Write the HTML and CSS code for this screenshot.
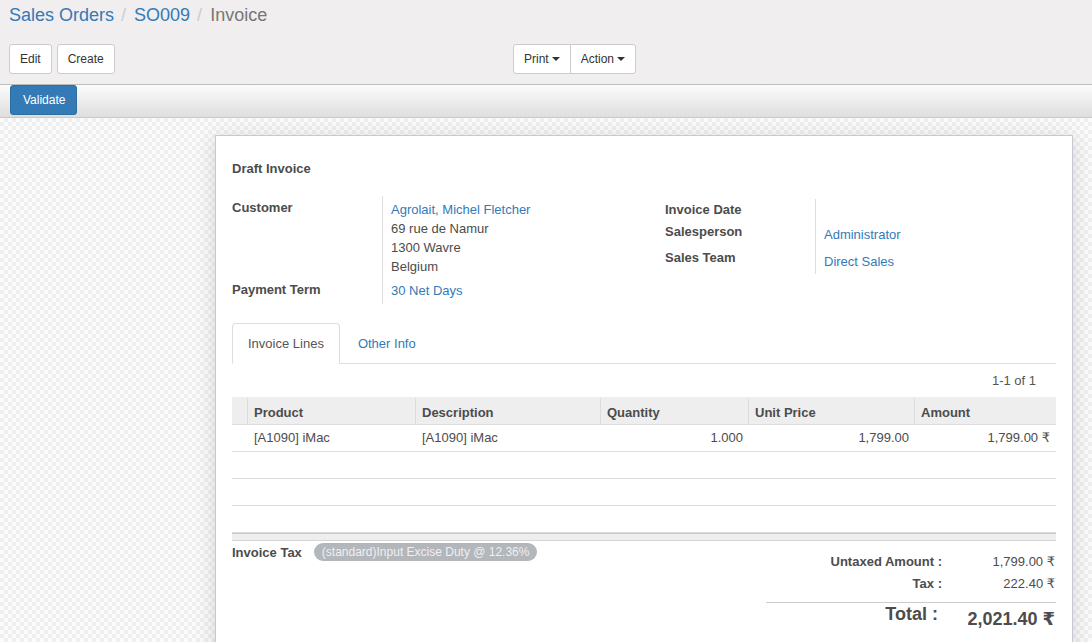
FILE: index.html
```html
<!DOCTYPE html>
<html>
<head>
<meta charset="utf-8">
<link rel="stylesheet" href="styles.css">
</head>
<body>
<div class="cp">
  <div class="crumbs">
    <a class="link">Sales Orders</a><span class="sep">/</span><a class="link">SO009</a><span class="sep">/</span><span class="cur">Invoice</span>
  </div>
  <div class="cp-row">
    <div class="cp-left">
      <button class="btn">Edit</button>
      <button class="btn">Create</button>
    </div>
    <div class="btn-group">
      <button class="btn grp">Print<span class="caret"></span></button>
      <button class="btn grp">Action<span class="caret"></span></button>
    </div>
  </div>
</div>
<div class="statusbar">
  <button class="btn primary">Validate</button>
</div>
<div class="sheetbg">
  <div class="sheet">
    <div class="title">Draft Invoice</div>
    <div class="groups">
      <div class="group left">
        <div class="row r-cust">
          <div class="lbl">Customer</div>
          <div class="val"><a class="link">Agrolait, Michel Fletcher</a><br>69 rue de Namur<br>1300 Wavre<br>Belgium</div>
        </div>
        <div class="row r-term">
          <div class="lbl">Payment Term</div>
          <div class="val"><a class="link">30 Net Days</a></div>
        </div>
      </div>
      <div class="group right">
        <div class="row r-date">
          <div class="lbl">Invoice Date</div>
          <div class="val"></div>
        </div>
        <div class="row r-sp">
          <div class="lbl">Salesperson</div>
          <div class="val"><a class="link">Administrator</a></div>
        </div>
        <div class="row r-team">
          <div class="lbl">Sales Team</div>
          <div class="val"><a class="link">Direct Sales</a></div>
        </div>
      </div>
    </div>
    <div class="tabs">
      <div class="tab active">Invoice Lines</div>
      <div class="tab"><a class="link">Other Info</a></div>
    </div>
    <div class="pager">1-1 of 1</div>
    <table class="lines">
      <colgroup>
        <col style="width:15px"><col style="width:168px"><col style="width:185px"><col style="width:148px"><col style="width:166px"><col>
      </colgroup>
      <thead>
        <tr><th class="handle"></th><th>Product</th><th>Description</th><th>Quantity</th><th>Unit Price</th><th>Amount</th></tr>
      </thead>
      <tbody>
        <tr><td></td><td>[A1090] iMac</td><td>[A1090] iMac</td><td class="num">1.000</td><td class="num">1,799.00</td><td class="num last">1,799.00 ₹</td></tr>
        <tr><td>&nbsp;</td><td></td><td></td><td></td><td></td><td></td></tr>
        <tr><td>&nbsp;</td><td></td><td></td><td></td><td></td><td></td></tr>
        <tr><td>&nbsp;</td><td></td><td></td><td></td><td></td><td></td></tr>
      </tbody>
      <tfoot>
        <tr><td colspan="6"></td></tr>
      </tfoot>
    </table>
    <div class="bottom">
      <div class="taxes">
        <span class="tax-lbl">Invoice Tax</span>
        <span class="pill">(standard)Input Excise Duty @ 12.36%</span>
      </div>
      <div class="totals">
        <div class="t-row"><span class="t-lbl">Untaxed Amount :</span><span class="t-val">1,799.00 ₹</span></div>
        <div class="t-row"><span class="t-lbl">Tax :</span><span class="t-val">222.40 ₹</span></div>
        <div class="t-row grand"><span class="t-lbl">Total :</span><span class="t-val">2,021.40 ₹</span></div>
      </div>
    </div>
  </div>
</div>
</body>
</html>
```

FILE: styles.css
```css
html, body {
  margin: 0;
  padding: 0;
  height: 100%;
}
body {
  font-family: "Liberation Sans", Arial, "DejaVu Sans", sans-serif;
  font-size: 13px;
  color: #4c4c4c;
  overflow: hidden;
  display: flex;
  flex-direction: column;
}
.link {
  color: #337ab7;
  text-decoration: none;
}
.cp {
  background: #f0eeee;
  border-bottom: 1px solid #bdbdbd;
  padding: 4px 0 10px 9px;
}
.crumbs {
  font-size: 18px;
  line-height: 22px;
}
.crumbs .sep {
  color: #ccc;
  padding: 0 8px 0 7px;
}
.crumbs .cur {
  color: #777;
}
.cp-row {
  display: flex;
  margin-top: 18px;
}
.cp-left {
  flex: 0 0 504px;
  display: flex;
  gap: 5px;
}
.btn {
  font-family: "Liberation Sans", Arial, sans-serif;
  font-size: 12px;
  color: #333;
  background: #fff;
  border: 1px solid #ccc;
  border-radius: 3px;
  height: 30px;
  padding: 0 10px;
  line-height: 28px;
  margin: 0;
}
.btn-group {
  display: flex;
}
.btn.grp:first-child {
  border-radius: 3px 0 0 3px;
}
.btn.grp:last-child {
  border-radius: 0 3px 3px 0;
  margin-left: -1px;
}
.caret {
  display: inline-block;
  width: 0;
  height: 0;
  margin-left: 3px;
  vertical-align: middle;
  border-top: 4px solid #333;
  border-left: 4px solid transparent;
  border-right: 4px solid transparent;
  position: relative;
  top: -1px;
}
.statusbar {
  background: linear-gradient(#fcfcfc, #dedede);
  border-bottom: 1px solid #cacaca;
  padding: 0 0 2px 10px;
  display: flex;
}
.btn.primary {
  background: #337ab7;
  border-color: #2e6da4;
  color: #fff;
  height: 30px;
  line-height: 28px;
  padding: 0 11px 0 12px;
}
.sheetbg {
  flex: 1;
  background-color: #fafafa;
  background-image: repeating-conic-gradient(#efefef 0 25%, #fbfbfb 0 50%);
  background-size: 8px 8px;
  padding: 17px 0 0 215px;
}
.sheet {
  width: 824px;
  min-height: 600px;
  background: #fff;
  border: 1px solid #c8c8d3;
  box-shadow: 0 4px 20px rgba(0, 0, 0, 0.15);
  padding: 24px 16px 0 16px;
}
.title {
  font-weight: bold;
  line-height: 17px;
}
.groups {
  display: grid;
  grid-template-columns: 433px 1fr;
  margin-top: 19px;
  align-items: start;
}
.group.right {
  margin-top: 3px;
}
.row {
  display: grid;
  grid-template-columns: 150px 1fr;
}
.lbl {
  font-weight: bold;
  line-height: 17px;
  padding-top: 3px;
}
.val {
  border-left: 1px solid #ddd;
  padding-left: 8px;
  line-height: 19px;
}
.r-cust .val { padding-top: 4px; padding-bottom: 2px; }
.r-term .val { padding-top: 3px; padding-bottom: 4px; }
.r-date .lbl, .r-sp .lbl, .r-team .lbl { padding-top: 2px; }
.r-date .val { height: 22px; }
.r-sp .val { padding-top: 4px; padding-bottom: 3px; }
.r-team .val { padding-top: 5px; padding-bottom: 3px; }
.tabs {
  display: flex;
  margin-top: 19px;
  border-bottom: 1px solid #ddd;
}
.tab {
  padding: 10px 15px;
  line-height: 19px;
  border: 1px solid transparent;
  border-radius: 4px 4px 0 0;
  margin-right: 2px;
  margin-bottom: -1px;
}
.tab.active {
  border-color: #ddd;
  border-bottom-color: #fff;
  background: #fff;
  color: #555;
}
.pager {
  text-align: right;
  line-height: 17px;
  padding: 8px 20px 8px 0;
  color: #555;
}
.lines {
  width: 100%;
  border-collapse: separate;
  border-spacing: 0;
  table-layout: fixed;
}
.lines th {
  background: #eee;
  border-top: 3px solid #eee;
  border-left: 1px solid #dcdcdc;
  border-bottom: 1px solid #ddd;
  text-align: left;
  font-weight: bold;
  line-height: 17px;
  padding: 4px 7px 3px 6px;
}
.lines th.handle {
  border-left: 0;
}
.lines td {
  line-height: 17px;
  padding: 4px 5px 5px 7px;
  border-bottom: 1px solid #ddd;
  white-space: nowrap;
}
.lines td.num {
  text-align: right;
}
.lines td.last {
  padding-right: 6px;
}
.lines tfoot td {
  padding: 0;
  height: 6px;
  background: #eee;
  border-top: 1px solid #c8c8c8;
  border-bottom: 1px solid #d6d6d6;
}
.bottom {
  display: flex;
  justify-content: space-between;
  align-items: flex-start;
}
.taxes {
  display: flex;
  align-items: center;
  gap: 12px;
  margin-top: 2px;
}
.tax-lbl {
  font-weight: bold;
  line-height: 17px;
}
.pill {
  background: #b3b6ba;
  color: #eef0f2;
  font-size: 12px;
  line-height: 18px;
  padding: 0 8px;
  border-radius: 9px;
}
.totals {
  width: 290px;
  padding-top: 10px;
}
.t-row {
  display: grid;
  grid-template-columns: 176px 1fr;
  line-height: 22px;
}
.t-lbl {
  font-weight: bold;
  text-align: right;
}
.t-val {
  text-align: right;
  padding-right: 1px;
}
.t-row.grand {
  margin-top: 7px;
  border-top: 1px solid #ccc;
}
.grand .t-lbl {
  font-size: 18px;
  padding-right: 4px;
}
.grand .t-val {
  font-size: 18px;
  font-weight: bold;
  line-height: 24px;
  padding-top: 4px;
}
```
